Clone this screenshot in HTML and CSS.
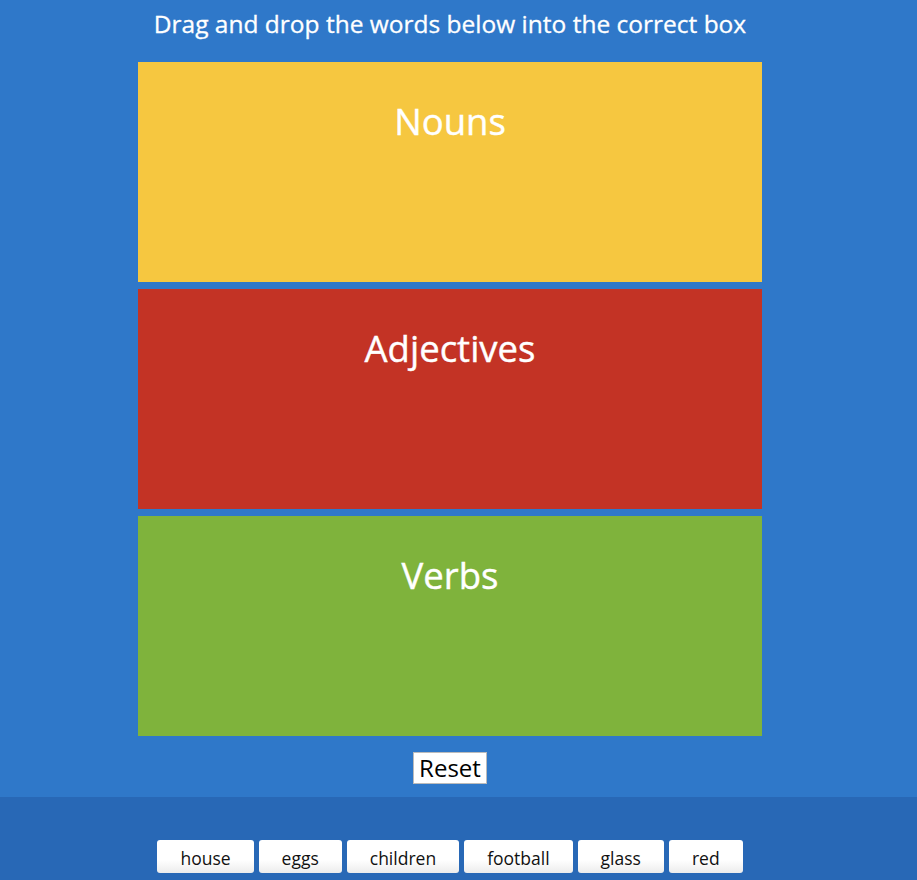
FILE: index.html
```html
<!DOCTYPE html>
<html>
<head>
<meta charset="utf-8">
<link rel="stylesheet" href="styles.css">
</head>
<body>
<div class="page">
  <div class="main">
    <h1 class="title">Drag and drop the words below into the correct box</h1>
    <div class="boxes">
      <div class="box box-nouns"><h2 class="box-title">Nouns</h2></div>
      <div class="box box-adjectives"><h2 class="box-title">Adjectives</h2></div>
      <div class="box box-verbs"><h2 class="box-title">Verbs</h2></div>
    </div>
    <div class="reset-row"><button class="reset">Reset</button></div>
  </div>
  <div class="tray">
    <div class="words">
      <span class="word">house</span>
      <span class="word">eggs</span>
      <span class="word">children</span>
      <span class="word">football</span>
      <span class="word">glass</span>
      <span class="word">red</span>
    </div>
  </div>
</div>
</body>
</html>
```
FILE: styles.css
```css
html, body {
  margin: 0;
  padding: 0;
  background: #2f78c9;
  height: 880px;
  overflow: hidden;
}
body {
  font-family: "Open Sans", "Liberation Sans", sans-serif;
}
.page {
  width: 917px;
  height: 880px;
  display: flex;
  flex-direction: column;
}
.main {
  width: 900px;
  display: flex;
  flex-direction: column;
  align-items: center;
  height: 797px;
}
.title {
  margin: 0;
  padding-top: 8px;
  height: 62px;
  box-sizing: border-box;
  font-size: 24.5px;
  font-weight: 400;
  -webkit-text-stroke: 0.3px #fff;
  color: #fff;
  line-height: 32px;
  text-align: center;
}
.boxes {
  display: flex;
  flex-direction: column;
  gap: 7px;
  width: 624px;
}
.box {
  height: 220px;
  display: flex;
  justify-content: center;
}
.box-nouns { background: #f6c740; }
.box-adjectives { background: #c33325; }
.box-verbs { background: #7fb33c; }
.box-title {
  margin: 0;
  padding-top: 35px;
  font-size: 36.5px;
  font-weight: 400;
  -webkit-text-stroke: 0.4px #fff;
  line-height: 48px;
  color: #fff;
}
.reset-row {
  padding-top: 16px;
}
.reset {
  font-family: "Open Sans", "Liberation Sans", sans-serif;
  font-size: 24px;
  line-height: 30px;
  padding: 0 4px;
  background: #fff;
  border: 1px solid #bbb;
  color: #000;
  border-radius: 0;
  height: 32px;
  width: 74px;
}
.tray {
  flex: 1;
  background: #2868b6;
  width: 917px;
}
.words {
  width: 900px;
  display: flex;
  justify-content: center;
  gap: 5px;
  padding-top: 43px;
  align-items: flex-start;
}
.word {
  display: block;
  height: 33px;
  box-sizing: border-box;
  padding: 3px 23px 0;
  line-height: 30px;
  font-size: 17.5px;
  color: #111;
  background: linear-gradient(#ffffff 60%, #ececec);
  border-radius: 3px;
}
```
